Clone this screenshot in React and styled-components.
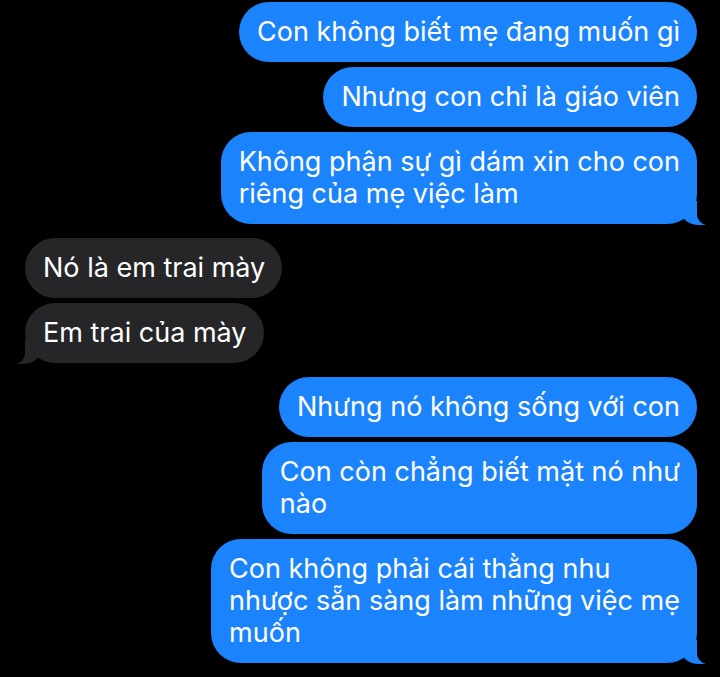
import React from "react";
import styled, { createGlobalStyle, css } from "styled-components";

const GlobalStyle = createGlobalStyle`
  html, body {
    margin: 0;
    padding: 0;
    background: #000;
  }
`;

const Thread = styled.div`
  width: 720px;
  height: 677px;
  overflow: hidden;
  background: #000;
  box-sizing: border-box;
  padding: 2px 23px 0 25px;
  display: flex;
  flex-direction: column;
  font-family: Inter, "Noto Sans", sans-serif;
`;

const Group = styled.div`
  display: flex;
  flex-direction: column;
  align-items: ${(p) => (p.$me ? "flex-end" : "flex-start")};
  gap: 5px;
  margin-bottom: 14px;
`;

const BLUE = "#1b84fd";
const GRAY = "#262628";

const Bubble = styled.div`
  position: relative;
  box-sizing: border-box;
  padding: 14px 17px 14px 18px;
  border-radius: 30px;
  font-size: 27px;
  line-height: 32px;
  color: #fff;
  white-space: nowrap;
  background: ${(p) => (p.$me ? BLUE : GRAY)};

  ${(p) =>
    p.$tail &&
    p.$me &&
    css`
      &::before {
        content: "";
        position: absolute;
        right: -8px;
        bottom: -1px;
        width: 24px;
        height: 24px;
        background: ${BLUE};
        border-bottom-left-radius: 18px 14px;
      }
      &::after {
        content: "";
        position: absolute;
        right: -26px;
        bottom: -1px;
        width: 26px;
        height: 26px;
        background: #000;
        border-bottom-left-radius: 11px;
      }
    `}

  ${(p) =>
    p.$tail &&
    !p.$me &&
    css`
      &::before {
        content: "";
        position: absolute;
        left: -8px;
        bottom: -1px;
        width: 24px;
        height: 24px;
        background: ${GRAY};
        border-bottom-right-radius: 18px 14px;
      }
      &::after {
        content: "";
        position: absolute;
        left: -26px;
        bottom: -1px;
        width: 26px;
        height: 26px;
        background: #000;
        border-bottom-right-radius: 11px;
      }
    `}
`;

const Text = styled.span`
  position: relative;
  z-index: 1;
`;

const groups = [
  {
    me: true,
    msgs: [
      ["Con không biết mẹ đang muốn gì"],
      ["Nhưng con chỉ là giáo viên"],
      ["Không phận sự gì dám xin cho con", "riêng của mẹ việc làm"],
    ],
  },
  {
    me: false,
    msgs: [["Nó là em trai mày"], ["Em trai của mày"]],
  },
  {
    me: true,
    msgs: [
      ["Nhưng nó không sống với con"],
      ["Con còn chẳng biết mặt nó như", "nào"],
      ["Con không phải cái thằng nhu", "nhược sẵn sàng làm những việc mẹ", "muốn"],
    ],
  },
];

export default function App() {
  return (
    <>
      <GlobalStyle />
      <Thread>
        {groups.map((g, gi) => (
          <Group key={gi} $me={g.me}>
            {g.msgs.map((lines, i) => (
              <Bubble key={i} $me={g.me} $tail={i === g.msgs.length - 1}>
                <Text>
                  {lines.map((l, li) => (
                    <React.Fragment key={li}>
                      {li > 0 && <br />}
                      {l}
                    </React.Fragment>
                  ))}
                </Text>
              </Bubble>
            ))}
          </Group>
        ))}
      </Thread>
    </>
  );
}
